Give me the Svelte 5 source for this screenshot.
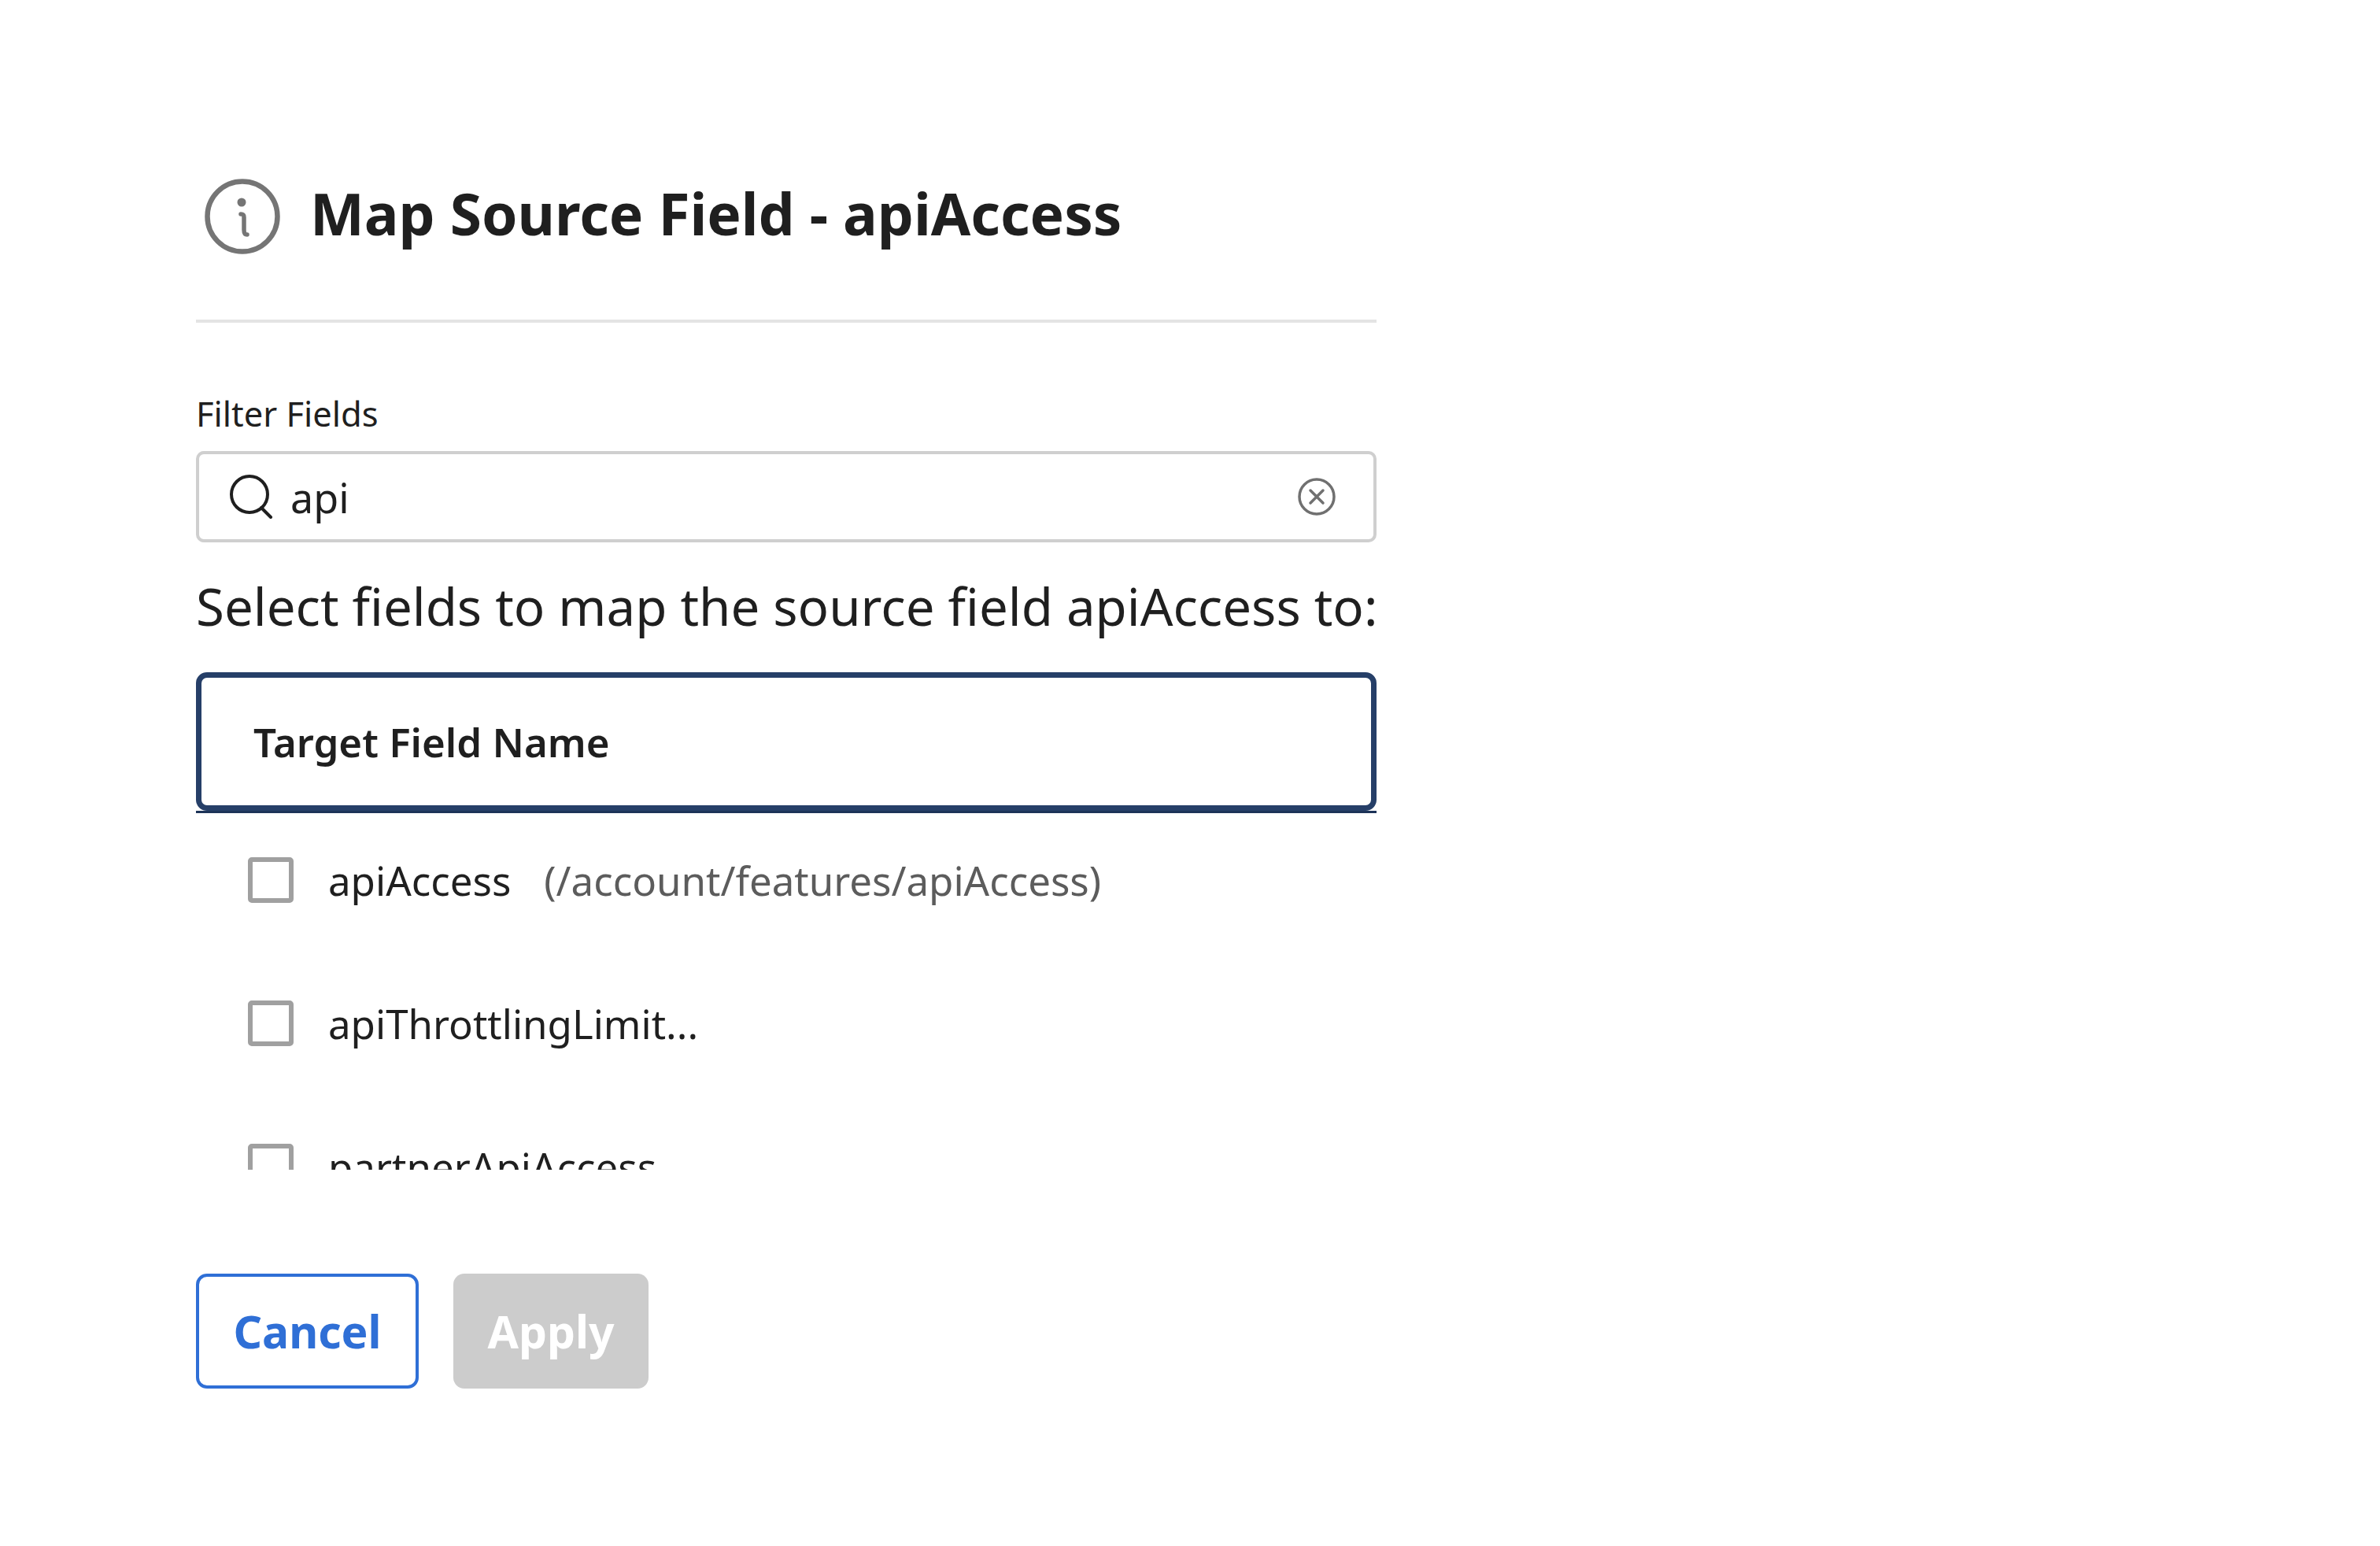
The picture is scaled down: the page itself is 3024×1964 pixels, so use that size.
<script>
  const rows = [
    { name: 'apiAccess', path: '(/account/features/apiAccess)' },
    { name: 'apiThrottlingLimit...', path: '' },
    { name: 'partnerApiAccess', path: '' }
  ];
</script>

<main class="dialog">
  <header class="head">
    <svg class="info" viewBox="0 0 96 96" fill="none" aria-hidden="true">
      <circle cx="48" cy="48" r="44.5" stroke="#757575" stroke-width="6.5" />
      <circle cx="47" cy="30" r="5.5" fill="#757575" />
      <path d="M46 45c3 0 4 1 4 4v16c0 4 1 6 4 6" stroke="#757575" stroke-width="5.5" stroke-linecap="round" />
    </svg>
    <h1>Map Source Field - apiAccess</h1>
  </header>

  <label class="label" for="filter">Filter Fields</label>
  <div class="search">
    <svg class="glass" viewBox="0 0 56 56" fill="none" aria-hidden="true">
      <circle cx="26" cy="25" r="23" stroke="#1f1f1f" stroke-width="4" />
      <path d="M41 42l12 12" stroke="#1f1f1f" stroke-width="4" stroke-linecap="round" />
    </svg>
    <input id="filter" value="api" />
    <svg class="clear" viewBox="0 0 48 48" fill="none" aria-hidden="true">
      <circle cx="24" cy="24" r="22" stroke="#707070" stroke-width="3.5" />
      <path d="M16 16l16 16M32 16L16 32" stroke="#707070" stroke-width="3.5" stroke-linecap="round" />
    </svg>
  </div>

  <p class="prompt">Select fields to map the source field apiAccess to:</p>

  <div class="table-wrap">
    <div class="table-head"><span>Target Field Name</span></div>
  </div>

  <ul class="list">
    {#each rows as row}
      <li>
        <span class="check"></span>
        <span class="name">{row.name}</span>
        {#if row.path}<span class="path">{row.path}</span>{/if}
      </li>
    {/each}
  </ul>

  <footer class="actions">
    <button class="cancel">Cancel</button>
    <button class="apply" disabled>Apply</button>
  </footer>
</main>

<style>
  :global(body) {
    margin: 0;
    background: #fff;
  }
  .dialog {
    width: 1500px;
    margin-left: 249px;
    padding-top: 227px;
    font-family: "Noto Sans", "Open Sans", sans-serif;
    color: #1f1f1f;
  }
  .head {
    display: flex;
    align-items: flex-start;
    gap: 38px;
    height: 183px;
    box-sizing: border-box;
    padding: 0 0 0 11px;
    border-bottom: 4px solid #e4e4e4;
  }
  .info {
    width: 96px;
    height: 96px;
    flex: none;
  }
  h1 {
    margin: -4px 0 0;
    font-size: 73px;
    line-height: 96px;
    font-weight: 700;
    white-space: nowrap;
  }
  .label {
    display: block;
    margin-top: 86px;
    font-size: 43.5px;
    line-height: 58px;
  }
  .search {
    margin-top: 19px;
    display: flex;
    align-items: center;
    height: 116px;
    box-sizing: border-box;
    border: 4px solid #cfcfcf;
    border-radius: 10px;
    padding: 0 48px 0 38px;
  }
  .glass {
    width: 56px;
    height: 56px;
    flex: none;
  }
  .search input {
    flex: 1;
    min-width: 0;
    margin-left: 22px;
    border: 0;
    outline: 0;
    padding: 0;
    font: inherit;
    font-size: 52px;
    color: #1f1f1f;
    background: transparent;
  }
  .clear {
    width: 48px;
    height: 48px;
    flex: none;
  }
  .prompt {
    margin: 37px 0 0;
    font-size: 65.4px;
    line-height: 88px;
    white-space: nowrap;
  }
  .table-wrap {
    margin-top: 40px;
    border-bottom: 3px solid #1c3358;
  }
  .table-head {
    height: 176px;
    box-sizing: border-box;
    display: flex;
    align-items: center;
    padding-left: 66px;
    border: 7px solid #263f68;
    border-radius: 14px;
    font-size: 51px;
    font-weight: 600;
  }
  .list {
    list-style: none;
    margin: 0;
    padding: 0;
    height: 453px;
    overflow: hidden;
  }
  li {
    display: flex;
    align-items: center;
    height: 182px;
    margin-top: -6px;
    margin-bottom: 6px;
    padding-left: 66px;
    font-size: 51px;
    white-space: nowrap;
  }
  .check {
    width: 58px;
    height: 58px;
    box-sizing: border-box;
    border: 6px solid #a0a0a0;
    border-radius: 5px;
    flex: none;
    margin-right: 44px;
  }
  .path {
    margin-left: 42px;
    color: #5c5c5c;
  }
  .actions {
    margin-top: 132px;
    display: flex;
    gap: 44px;
  }
  button {
    height: 146px;
    box-sizing: border-box;
    border-radius: 14px;
    font: inherit;
    font-size: 57px;
    font-weight: 700;
    padding: 0;
  }
  .cancel {
    width: 283px;
    background: #fff;
    color: #2f6fd6;
    border: 4px solid #2f6fd6;
  }
  .apply {
    width: 248px;
    background: #cccccc;
    color: #fff;
    border: 0;
  }
</style>
